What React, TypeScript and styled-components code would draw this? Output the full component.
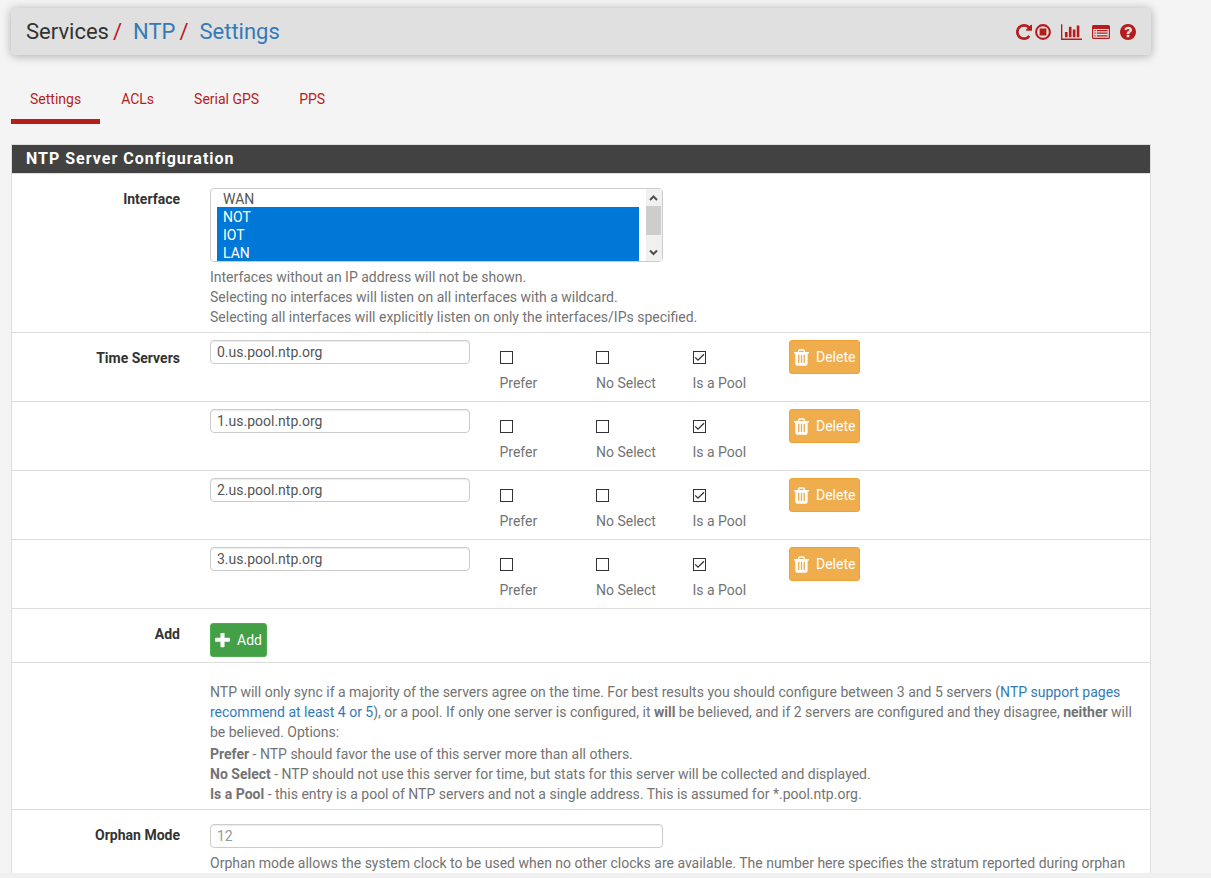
import React from 'react';
import styled, { createGlobalStyle, css } from 'styled-components';

const GlobalStyle = createGlobalStyle`
  *, *::before, *::after { box-sizing: border-box; }
  body {
    margin: 0;
    background: #f4f4f4;
    color: #333;
    font: 14px/20px Roboto, "Liberation Sans", sans-serif;
  }
  input, select, button { font: inherit; }
`;

const Page = styled.div`
  display: flex;
  flex-direction: column;
  height: 100vh;
`;

const Content = styled.main`
  flex: 1;
  min-height: 0;
  overflow: hidden;
  padding: 8px 60px 0 11px;
`;

const BottomEdge = styled.div`
  height: 5px;
  flex: none;
  background: #f0f0f0;
`;

const Header = styled.header`
  display: flex;
  align-items: center;
  justify-content: space-between;
  height: 47px;
  padding: 0 15px;
  background: #e0e0e0;
  border-radius: 4px;
  box-shadow: 0 1px 10px rgba(0, 0, 0, 0.3);
`;

const Breadcrumb = styled.h1`
  display: flex;
  margin: 0;
  font-size: 22px;
  line-height: 30px;
  font-weight: 400;
`;

const Slash = styled.span`
  margin: 0 11px 0 4px;
  color: #b71c1c;
`;

const TextLink = styled.a`
  color: #337ab7;
  text-decoration: none;
`;

const HeaderActions = styled.nav`
  display: flex;
  align-items: center;
  gap: 10px;
`;

const ActionPair = styled.div`
  display: flex;
  gap: 3px;
`;

const IconLink = styled.a`
  display: flex;
  color: #b71c1c;
`;

const Icon = styled.svg`
  display: block;
  fill: currentColor;
`;

const Tabs = styled.nav`
  display: flex;
  gap: 2px;
  margin: 20px 0;
`;

const Tab = styled.a<{ $active?: boolean }>`
  padding: 14px 19px 10px;
  border-bottom: 5px solid ${(p) => (p.$active ? '#b71c1c' : 'transparent')};
  color: #b71c1c;
  text-decoration: none;
`;

const Panel = styled.section`
  background: #fff;
  border: 1px solid #ddd;
`;

const PanelTitle = styled.h2`
  margin: 0;
  padding: 4px 14px;
  border-bottom: 1px solid #ddd;
  background: #424242;
  background-clip: padding-box;
  color: #fff;
  font-size: 16px;
  line-height: 20px;
  font-weight: 700;
  letter-spacing: 1px;
`;

const Row = styled.div`
  border-bottom: 1px solid #ddd;
`;

const Columns = styled.div`
  display: grid;
  grid-template-columns: repeat(12, 1fr);
  margin: 0 -10px;
`;

const labelStyle = css`
  grid-column: span 2;
  padding: 15px 15px 0;
  font-weight: 700;
  text-align: right;
`;

const FieldLabel = styled.label`
  ${labelStyle}
`;

const RowLabel = styled.span`
  ${labelStyle}
`;

const Cell = styled.div<{ $span: number; $top: number }>`
  grid-column: span ${(p) => p.$span};
  padding: ${(p) => p.$top}px 15px 5px;
`;

const Half = styled.div`
  position: relative;
  width: calc(50% - 15px);
`;

const HelpText = styled.p`
  margin: 5px 0 0;
  color: #737373;
`;

const Notes = styled.div`
  display: flex;
  flex-direction: column;
  gap: 2px;
  color: #737373;

  p { margin: 0; }
`;

const TextInput = styled.input`
  display: block;
  width: 100%;
  height: 24px;
  padding: 0 6px;
  border: 1px solid #ccc;
  border-radius: 4px;
  background: #fff;
  box-shadow: inset 0 1px 1px rgba(0, 0, 0, 0.08);
  color: #555;

  &::placeholder { color: #999; opacity: 1; }
`;

const InterfaceSelect = styled.select`
  display: block;
  width: 100%;
  height: 74px;
  padding: 0 23px 0 6px;
  border: 1px solid #ccc;
  border-radius: 4px;
  background: #fff;
  color: #555;
  overflow: hidden;
  outline: none;

  option {
    height: 18px;
    min-height: 18px;
    padding: 2px 6px 0;
    line-height: 16px;
  }
  option:checked {
    background: #0078d7 linear-gradient(#0078d7, #0078d7);
    color: #fff;
    -webkit-text-fill-color: #fff;
  }
`;

/* Classic scroll bar, laid over the right edge of the list box */
const ScrollBar = styled.div`
  position: absolute;
  top: 1px;
  right: 1px;
  bottom: 1px;
  width: 16px;
  padding-right: 1px;
  display: flex;
  flex-direction: column;
  background: #f0f0f0;
  pointer-events: none;
`;

const ScrollArrow = styled.svg`
  display: block;
  flex: none;
  fill: none;
  stroke: #505050;
  stroke-width: 2;
`;

const ScrollTrack = styled.div`
  flex: 1;
`;

const ScrollThumb = styled.div`
  height: 29px;
  background: #cdcdcd;
`;

const CheckLabel = styled.label`
  display: flex;
  flex-direction: column;
  gap: 9px;
  padding: 11px 0 3px;
  color: #737373;
  white-space: nowrap;
`;

const Checkbox = styled.input`
  appearance: none;
  width: 13px;
  height: 13px;
  margin: 0;
  border: 1px solid #333;
  background: #fff;

  &:checked {
    background: #fff
      url("data:image/svg+xml,%3Csvg xmlns='http://www.w3.org/2000/svg' width='11' height='11'%3E%3Cpath d='M1.2 5.4L4 8.2L10 2.2' fill='none' stroke='%23333' stroke-width='1.3'/%3E%3C/svg%3E")
      no-repeat;
  }
`;

const Button = styled.button<{ $tone: 'warning' | 'success' }>`
  display: inline-flex;
  align-items: center;
  gap: 7px;
  height: 34px;
  padding: 0 4px;
  border: 1px solid ${(p) => (p.$tone === 'warning' ? '#eea236' : '#4cae4c')};
  border-radius: 3px;
  background: ${(p) => (p.$tone === 'warning' ? '#f0ad4e' : '#43a047')};
  color: #fff;
  vertical-align: top;
  white-space: nowrap;
`;

const RepeatIcon = () => (
  <Icon width="16" height="16" viewBox="128 128 1536 1536" aria-hidden="true">
    <path d="M1664 256v448q0 26-19 45t-45 19h-448q-42 0-59-40-17-39 14-69l138-138q-148-137-349-137-104 0-198.5 40.5t-163.5 109.5-109.5 163.5-40.5 198.5 40.5 198.5 109.5 163.5 163.5 109.5 198.5 40.5q119 0 225-52t179-147q7-10 23-12 15 0 25 9l137 138q9 8 9.5 20.5t-7.5 22.5q-109 132-264 204.5t-327 72.5q-156 0-298-61t-245-164-164-245-61-298 61-298 164-245 245-164 298-61q147 0 284.5 55.5t244.5 156.5l130-129q29-31 70-14 39 17 39 59z" />
  </Icon>
);

const StopIcon = () => (
  <Icon width="16" height="16" viewBox="0 0 16 16" aria-hidden="true">
    <circle cx="8" cy="8" r="6.9" fill="none" stroke="currentColor" strokeWidth="2.1" />
    <rect x="4.6" y="4.6" width="6.8" height="6.8" rx="0.4" />
  </Icon>
);

const ChartIcon = () => (
  <Icon width="21" height="16" viewBox="0 128 2048 1536" aria-hidden="true">
    <path d="M640 896v512h-256v-512h256zm384-512v1024h-256v-1024h256zm1024 1152v128h-2048v-1536h128v1408h1920zm-640-896v768h-256v-768h256zm384-384v1152h-256v-1152h256z" />
  </Icon>
);

const ListIcon = () => (
  <Icon width="18" height="16" viewBox="0 0 18 16" aria-hidden="true">
    <path
      fillRule="evenodd"
      d="M1.6 1H16.4Q18 1 18 2.6V13.4Q18 15 16.4 15H1.6Q0 15 0 13.4V2.6Q0 1 1.6 1ZM1.2 5V13.3Q1.2 13.8 1.7 13.8H16.3Q16.8 13.8 16.8 13.3V5Z"
    />
    <path d="M2.4 6h1.3v1.2H2.4zM2.4 8.6h1.3v1.2H2.4zM2.4 11.2h1.3v1.2H2.4zM4.8 6h10.8v1.2H4.8zM4.8 8.6h10.8v1.2H4.8zM4.8 11.2h10.8v1.2H4.8z" />
  </Icon>
);

const HelpIcon = () => (
  <Icon width="16" height="16" viewBox="128 128 1536 1536" aria-hidden="true">
    <path d="M1024 1376v-192q0-14-9-23t-23-9h-192q-14 0-23 9t-9 23v192q0 14 9 23t23 9h192q14 0 23-9t9-23zm256-672q0-88-55.5-163t-138.5-116-170-41q-243 0-371 213-15 24 8 42l132 100q7 6 19 6 16 0 25-12 53-68 86-92 34-24 86-24 48 0 85.5 26t37.5 59q0 38-20 61t-68 45q-63 28-115.5 86.5t-52.5 125.5v36q0 14 9 23t23 9h192q14 0 23-9t9-23q0-19 21.5-49.5t54.5-49.5q32-18 49-28.5t46-35 44.5-48 28-60.5 12.5-81zm384 192q0 209-103 385.5t-279.5 279.5-385.5 103-385.5-103-279.5-279.5-103-385.5 103-385.5 279.5-279.5 385.5-103 385.5 103 279.5 279.5 103 385.5z" />
  </Icon>
);

const TrashIcon = () => (
  <Icon width="15" height="17" viewBox="192 128 1408 1536" aria-hidden="true">
    <path d="M704 1376v-704q0-14-9-23t-23-9h-64q-14 0-23 9t-9 23v704q0 14 9 23t23 9h64q14 0 23-9t9-23zm256 0v-704q0-14-9-23t-23-9h-64q-14 0-23 9t-9 23v704q0 14 9 23t23 9h64q14 0 23-9t9-23zm256 0v-704q0-14-9-23t-23-9h-64q-14 0-23 9t-9 23v704q0 14 9 23t23 9h64q14 0 23-9t9-23zm-544-992h448l-48-117q-7-9-17-11h-317q-10 2-17 11zm928 32v64q0 14-9 23t-23 9h-96v948q0 83-47 143.5t-113 60.5h-832q-66 0-113-58.5t-47-141.5v-952h-96q-14 0-23-9t-9-23v-64q0-14 9-23t23-9h309l70-167q15-37 54-63t79-26h320q40 0 79 26t54 63l70 167h309q14 0 23 9t9 23z" />
  </Icon>
);

const PlusIcon = () => (
  <Icon width="15" height="15" viewBox="192 192 1408 1408" aria-hidden="true">
    <path d="M1600 736v192q0 40-28 68t-68 28h-416v416q0 40-28 68t-68 28h-192q-40 0-68-28t-28-68v-416h-416q-40 0-68-28t-28-68v-192q0-40 28-68t68-28h416v-416q0-40 28-68t68-28h192q40 0 68 28t28 68v416h416q40 0 68 28t28 68z" />
  </Icon>
);

const servers = ['0.us.pool.ntp.org', '1.us.pool.ntp.org', '2.us.pool.ntp.org', '3.us.pool.ntp.org'];
const flags = ['Prefer', 'No Select', 'Is a Pool'];

function ServerRow({ host, index }: { host: string; index: number }) {
  const id = `server${index}`;
  return (
    <Row>
      <Columns>
        <FieldLabel htmlFor={id}>{index === 0 ? 'Time Servers' : ''}</FieldLabel>
        <Cell $span={3} $top={7}>
          <TextInput id={id} type="text" defaultValue={host} />
        </Cell>
        {flags.map((flag) => (
          <Cell key={flag} $span={1} $top={7}>
            <CheckLabel>
              <Checkbox type="checkbox" defaultChecked={flag === 'Is a Pool'} />
              {flag}
            </CheckLabel>
          </Cell>
        ))}
        <Cell $span={2} $top={7}>
          <Button type="button" $tone="warning">
            <TrashIcon />
            Delete
          </Button>
        </Cell>
      </Columns>
    </Row>
  );
}

export default function App() {
  return (
    <Page>
      <GlobalStyle />
      <Content>
        <Header>
          <Breadcrumb>
            Services<Slash>/</Slash>
            <TextLink href="#ntp">NTP</TextLink>
            <Slash>/</Slash>
            <TextLink href="#settings">Settings</TextLink>
          </Breadcrumb>
          <HeaderActions>
            <ActionPair>
              <IconLink href="#restart"><RepeatIcon /></IconLink>
              <IconLink href="#stop"><StopIcon /></IconLink>
            </ActionPair>
            <IconLink href="#graphs"><ChartIcon /></IconLink>
            <IconLink href="#logs"><ListIcon /></IconLink>
            <IconLink href="#help"><HelpIcon /></IconLink>
          </HeaderActions>
        </Header>

        <Tabs>
          <Tab href="#settings" $active>Settings</Tab>
          <Tab href="#acls">ACLs</Tab>
          <Tab href="#gps">Serial GPS</Tab>
          <Tab href="#pps">PPS</Tab>
        </Tabs>

        <Panel>
          <PanelTitle>NTP Server Configuration</PanelTitle>

          <Row>
            <Columns>
              <FieldLabel htmlFor="interface">Interface</FieldLabel>
              <Cell $span={10} $top={14}>
                <Half>
                  <InterfaceSelect id="interface" multiple size={4} defaultValue={['not', 'iot', 'lan']}>
                    <option value="wan">WAN</option>
                    <option value="not">NOT</option>
                    <option value="iot">IOT</option>
                    <option value="lan">LAN</option>
                  </InterfaceSelect>
                  <ScrollBar aria-hidden="true">
                    <ScrollArrow width="15" height="17" viewBox="0 0 15 17">
                      <path d="M4 11L7.5 7.5L11 11" />
                    </ScrollArrow>
                    <ScrollTrack>
                      <ScrollThumb />
                    </ScrollTrack>
                    <ScrollArrow width="15" height="17" viewBox="0 0 15 17">
                      <path d="M4 6.5L7.5 10L11 6.5" />
                    </ScrollArrow>
                  </ScrollBar>
                </Half>
                <HelpText>
                  Interfaces without an IP address will not be shown.
                  <br />
                  Selecting no interfaces will listen on all interfaces with a wildcard.
                  <br />
                  Selecting all interfaces will explicitly listen on only the interfaces/IPs specified.
                </HelpText>
              </Cell>
            </Columns>
          </Row>

          {servers.map((host, index) => (
            <ServerRow key={host} host={host} index={index} />
          ))}

          <Row>
            <Columns>
              <RowLabel>Add</RowLabel>
              <Cell $span={10} $top={14}>
                <Button type="button" $tone="success">
                  <PlusIcon />
                  Add
                </Button>
              </Cell>
            </Columns>
          </Row>

          <Row>
            <Columns>
              <RowLabel />
              <Cell $span={10} $top={19}>
                <Notes>
                  <p>
                    NTP will only sync if a majority of the servers agree on the time. For best results you should
                    configure between 3 and 5 servers (
                    <TextLink href="#support">NTP support pages recommend at least 4 or 5</TextLink>), or a pool. If
                    only one server is configured, it <b>will</b> be believed, and if 2 servers are configured and they
                    disagree, <b>neither</b> will be believed. Options:
                  </p>
                  <p>
                    <b>Prefer</b> - NTP should favor the use of this server more than all others.
                    <br />
                    <b>No Select</b> - NTP should not use this server for time, but stats for this server will be
                    collected and displayed.
                    <br />
                    <b>Is a Pool</b> - this entry is a pool of NTP servers and not a single address. This is assumed
                    for *.pool.ntp.org.
                  </p>
                </Notes>
              </Cell>
            </Columns>
          </Row>

          <Row>
            <Columns>
              <FieldLabel htmlFor="orphan">Orphan Mode</FieldLabel>
              <Cell $span={10} $top={14}>
                <Half>
                  <TextInput id="orphan" type="text" placeholder="12" />
                </Half>
                <HelpText>
                  Orphan mode allows the system clock to be used when no other clocks are available. The number here
                  specifies the stratum reported during orphan
                </HelpText>
              </Cell>
            </Columns>
          </Row>
        </Panel>
      </Content>
      <BottomEdge />
    </Page>
  );
}
